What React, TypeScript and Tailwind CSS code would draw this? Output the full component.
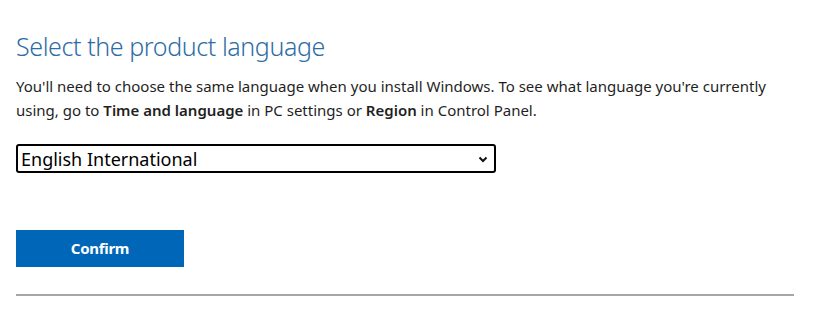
export default function App() {
  return (
    <div
      className="w-[822px] h-[319px] bg-white px-4 pt-[28px]"
      style={{ fontFamily: '"Segoe UI", "Noto Sans", "Open Sans", sans-serif' }}
    >
      <div className="w-[778px]">
        <h2 className="text-[25px] leading-[36px] font-light tracking-[-0.4px] text-[#2e6ca4]">
          Select the product language
        </h2>
        <p className="mt-[10px] text-[15px] leading-[24px] text-[#1f1f1f]">
          You'll need to choose the same language when you install Windows. To see what language
          you're currently using, go to <span className="font-semibold">Time and language</span> in PC
          settings or <span className="font-semibold">Region</span> in Control Panel.
        </p>
        <div className="mt-[22px] w-[480px] h-[29px] border-2 border-black rounded-[3px] flex items-center justify-between pl-[3px] pr-[6px]">
          <span className="text-[18px] leading-none text-black">English International</span>
          <svg width="10" height="7" viewBox="0 0 10 7" className="mt-[1px]">
            <path d="M1.5 1.5 L5 5 L8.5 1.5" fill="none" stroke="#111" strokeWidth="2" />
          </svg>
        </div>
        <button className="mt-[57px] w-[168px] h-[37px] bg-[#0067b8] text-white text-[15px] font-bold tracking-[-0.3px] flex items-center justify-center">
          Confirm
        </button>
        <div className="mt-[27px] h-[2px] bg-[#a6a6a6]" />
      </div>
    </div>
  );
}
